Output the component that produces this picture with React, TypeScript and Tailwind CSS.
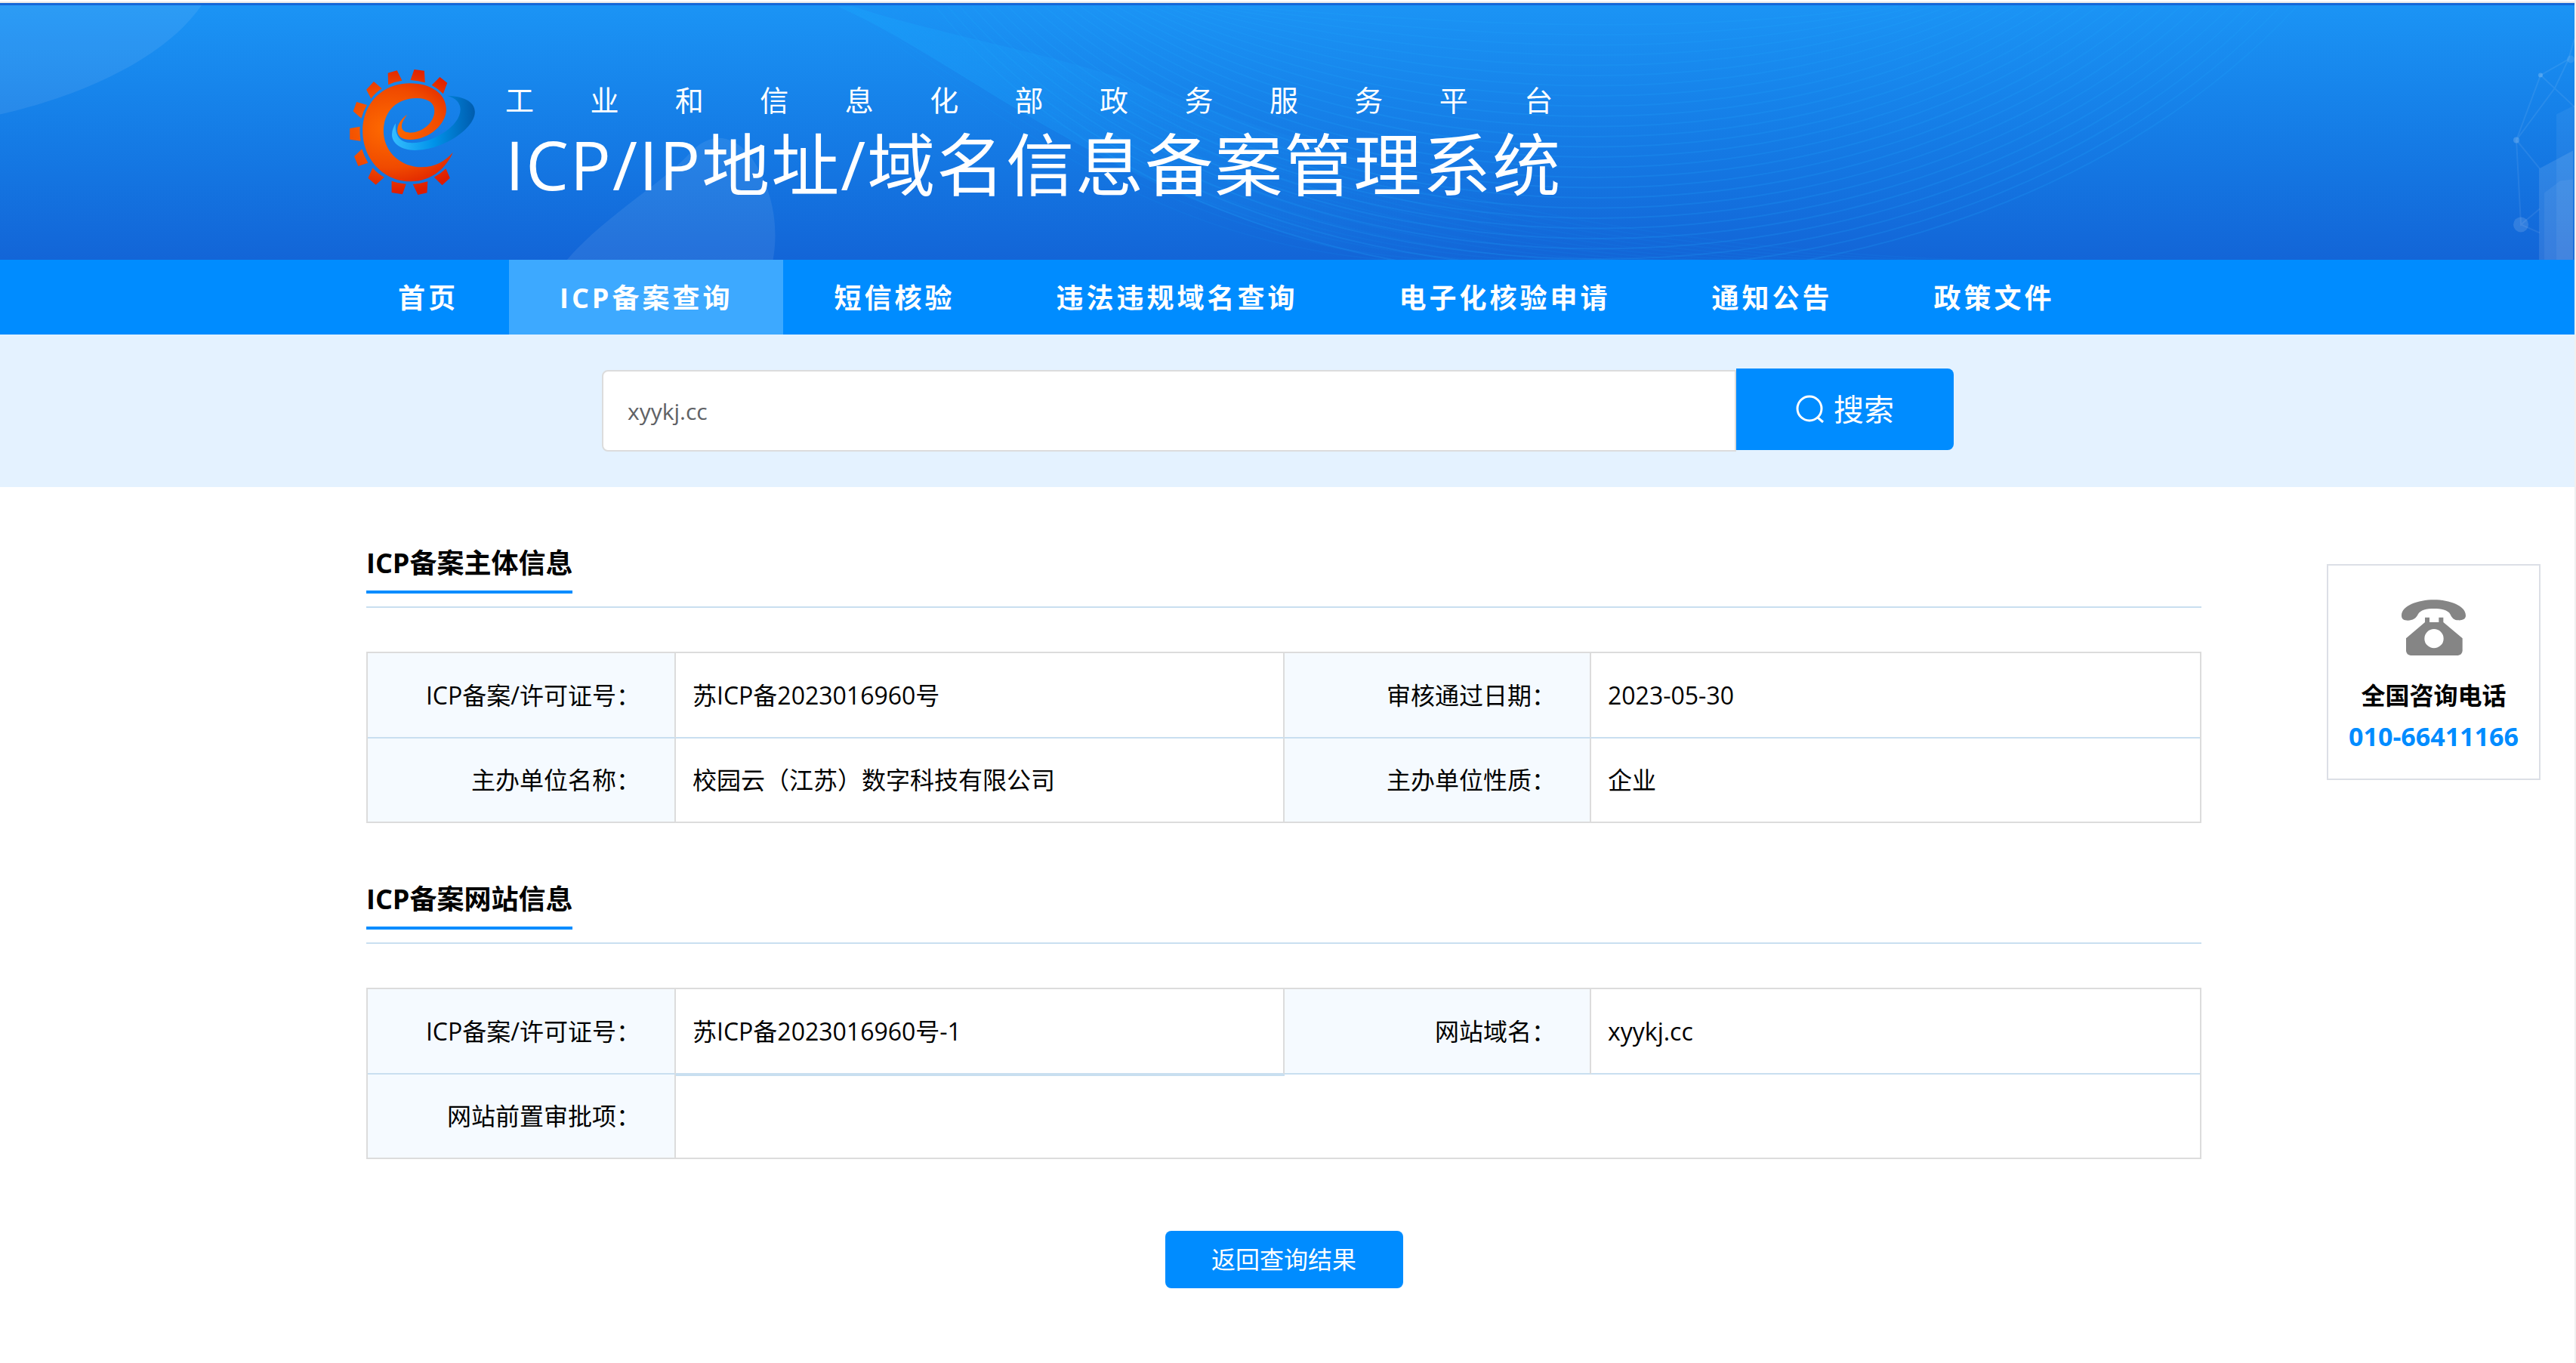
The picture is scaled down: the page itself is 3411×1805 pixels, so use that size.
import React from "react";

const navItems = [
  { label: "首页" },
  { label: "ICP备案查询", active: true },
  { label: "短信核验" },
  { label: "违法违规域名查询" },
  { label: "电子化核验申请" },
  { label: "通知公告" },
  { label: "政策文件" },
];

const waves = Array.from({ length: 26 }, (_, i) => i);
const ripples = Array.from({ length: 14 }, (_, i) => i);

function HeaderBackdrop() {
  return (
    <svg
      className="absolute inset-0 h-full w-full"
      viewBox="0 4 3411 340"
      preserveAspectRatio="xMidYMid slice"
      aria-hidden="true"
      fill="none"
    >
      <defs>
        <linearGradient id="fan" x1="1100" y1="0" x2="2000" y2="340" gradientUnits="userSpaceOnUse">
          <stop offset="0" stopColor="#1aa0fa" stopOpacity="0.6" />
          <stop offset="0.5" stopColor="#1a9cf8" stopOpacity="0.15" />
          <stop offset="1" stopColor="#1a9cf8" stopOpacity="0" />
        </linearGradient>
      </defs>
      <path d="M0 4H268C220 75 110 125 0 150Z" fill="#fff" fillOpacity="0.08" />
      <path
        d="M750 344C800 285 880 240 915 200C940 175 965 175 990 200C1015 230 1035 285 1024 344Z"
        fill="#fff"
        fillOpacity="0.08"
      />
      <path
        d="M1110 7C1230 60 1350 160 1560 255C1700 310 1760 330 1850 344H2400C2100 300 1750 200 1480 100C1350 60 1230 40 1130 7Z"
        fill="url(#fan)"
      />
      <g stroke="#1ea5fa" strokeWidth="2" strokeOpacity="0.22">
        {waves.map((i) => (
          <path
            key={i}
            d={`M${1240 + i * 16} 7C${1620 + i * 14} ${484 - i * 18} ${2590 - i * 14} ${494 - i * 18} ${3043 - i * 22} 7`}
          />
        ))}
      </g>
      <g stroke="#1ea5fa" strokeWidth="2" strokeOpacity="0.08">
        {ripples.map((i) => (
          <path key={i} d={`M${1120 + i * 10} 7C${1400 + i * 20} 220 ${1600 + i * 40} 330 ${1860 + i * 60} 344`} />
        ))}
      </g>
      <g stroke="#fff" strokeWidth="2" strokeOpacity="0.08">
        <path d="M3366 98L3334 184L3365 222M3334 184L3340 296L3365 275M3340 296L3365 307M3366 98L3403 77L3411 50M3366 98L3411 140M3403 77L3385 115L3334 184" />
      </g>
      <g fill="#fff">
        <circle cx="3366" cy="98" r="3" fillOpacity="0.2" />
        <circle cx="3334" cy="184" r="4" fillOpacity="0.18" />
        <circle cx="3340" cy="296" r="10" fillOpacity="0.13" />
        <circle cx="3406" cy="77" r="5" fillOpacity="0.1" />
        <path d="M3387 150L3411 138V344H3387Z" fillOpacity="0.06" />
        <path d="M3364 222L3409 198V344H3364Z" fillOpacity="0.11" />
        <path d="M3371 254L3392 238L3409 236V344H3371Z" fillOpacity="0.06" />
      </g>
    </svg>
  );
}

function Logo() {
  return (
    <svg className="size-[166px] shrink-0" viewBox="0 0 166 166" role="img" aria-label="工业和信息化部">
      <defs>
        <radialGradient id="orange" cx="170" cy="300" r="260" gradientUnits="userSpaceOnUse">
          <stop offset="0" stopColor="#ff6c00" />
          <stop offset="0.6" stopColor="#f04a00" />
          <stop offset="1" stopColor="#dd1c00" />
        </radialGradient>
        <linearGradient id="swoosh" x1="177" y1="0" x2="423" y2="0" gradientUnits="userSpaceOnUse">
          <stop offset="0" stopColor="#35bdff" />
          <stop offset="0.5" stopColor="#0093ea" />
          <stop offset="1" stopColor="#005cae" />
        </linearGradient>
      </defs>
      <g transform="translate(-23 -22) scale(0.4464 0.3333)">
        <path
          d="M340 170C385 172 423 190 423 235C423 300 330 387 245 387C205 387 177 360 177 325C177 308 182 292 188 280C186 320 195 358 237 358C300 358 380 290 380 225C380 200 368 180 340 170Z"
          fill="url(#swoosh)"
        />
        <g fill="url(#orange)">
          <path d="M358 395C340 450 300 510 232 511C150 511 90 420 90 310C90 200 150 121 230 121C295 121 338 165 338 225C338 280 290 345 230 345C205 345 192 330 193 305C194 280 208 258 222 245C214 262 206 275 206 292C206 308 215 316 230 317C265 317 303 280 303 230C303 200 285 180 250 180C190 180 152 235 152 310C152 390 200 453 265 454C305 454 335 430 358 395Z" />
          <path d="M165 80L192 70L207 110Q185 114 166 127ZM243 66L273 71L275 118Q255 110 232 108ZM319 96L341 119L329 163Q314 142 295 128ZM123 114L147 142Q128 158 115 182L101 146ZM72 195L103 207Q92 230 86 260L62 232ZM52 300L82 293Q81 320 84 350L52 344ZM88 382Q94 410 106 437L77 450L65 411ZM120 457Q134 480 154 494L129 524L106 497ZM176 509Q196 519 219 521L208 562L176 555ZM283 511L281 556L254 564L239 522Q262 520 283 511ZM337 460L349 497L326 526L302 494Q322 480 337 460Z" />
        </g>
      </g>
    </svg>
  );
}

function SearchIcon() {
  return (
    <svg className="size-[38px]" viewBox="0 0 38 38" fill="none" stroke="currentColor" strokeWidth="3" aria-hidden="true">
      <circle cx="18" cy="18" r="16" />
      <path d="M29 30L36 36" />
    </svg>
  );
}

function PhoneIcon() {
  return (
    <svg className="h-[75px] w-[85px]" viewBox="390 221 255 225" fill="#858585" aria-hidden="true">
      <path d="M519 222C580 222 645 245 645 285C645 300 630 304 615 303C600 303 590 295 584 280C575 262 545 257 519 257C490 257 465 262 455 280C448 295 435 303 415 304C400 304 390 300 390 285C390 245 455 222 519 222Z" />
      <path
        fillRule="evenodd"
        d="M483 292H501V311H538V292H556V311L632 375V425Q630 441 614 443H426Q410 441 408 425V375L483 311ZM519 338A38 38 0 1 0 519 414A38 38 0 1 0 519 338Z"
      />
    </svg>
  );
}

function SectionTitle({ children }: { children: React.ReactNode }) {
  return (
    <div className="flex border-b-2 border-[#c9dff0] pb-[17px]">
      <h2 className="border-b-4 border-[#008cff] pb-[9px] text-[36px] leading-[54px] font-bold">{children}</h2>
    </div>
  );
}

function Label({ children, last }: { children: React.ReactNode; last?: boolean }) {
  return (
    <th
      scope="row"
      className={
        "border-r-2 border-r-[#dcdcdc] bg-[#f5faff] pr-[45px] text-right font-normal " +
        (last ? "" : "border-b-2 border-b-[#c9dff0]")
      }
    >
      {children}
    </th>
  );
}

function Columns() {
  return (
    <colgroup>
      <col className="w-[408px]" />
      <col className="w-[806px]" />
      <col className="w-[406px]" />
      <col />
    </colgroup>
  );
}

const tableClass =
  "mt-[58px] w-full table-fixed border-separate border-spacing-0 border-2 border-[#dcdcdc] text-[32px] leading-[48px]";

export default function App() {
  return (
    <div className="relative min-h-screen border-r-2 border-[#f0f0f0] bg-white font-['Open_Sans','Noto_Sans_CJK_SC',sans-serif] text-black">
      <div className="h-1 border-b-2 border-[#e8e8e8]" />
      <header className="relative h-[340px] border-t-3 border-[#1467d8] bg-linear-to-b from-[#1b94f5] to-[#1365d7]">
        <HeaderBackdrop />
        <div className="relative pr-[9px]">
          <div className="mx-auto flex w-full max-w-[2474px] items-start pt-[85px]">
            <Logo />
            <div className="ml-10 text-white">
              <p className="pr-3 text-[38px] leading-[80px] [text-align-last:justify]">工业和信息化部政务服务平台</p>
              <h1 className="text-[90px] leading-[90px] tracking-[2px]">ICP/IP地址/域名信息备案管理系统</h1>
            </div>
          </div>
        </div>
      </header>

      <nav className="bg-[#008cff] pr-[9px]">
        <ul className="mx-auto flex w-full max-w-[2480px]">
          {navItems.map((item) => (
            <li key={item.label}>
              <a
                href="#"
                className={
                  "block h-[99px] px-[67px] text-[36px] leading-[102px] font-bold tracking-[4px] whitespace-nowrap text-white " +
                  (item.active ? "bg-[#3da9ff]" : "")
                }
              >
                {item.label}
              </a>
            </li>
          ))}
        </ul>
      </nav>

      <section className="bg-[#e4f2ff] pt-[45px] pr-[25px] pb-[47px]">
        <form className="mx-auto flex w-full max-w-[1790px]" onSubmit={(e) => e.preventDefault()}>
          <input
            type="text"
            aria-label="搜索内容"
            defaultValue="xyykj.cc"
            className="mt-[2px] h-[108px] min-w-0 flex-1 rounded-l-lg border-2 border-[#dcdcdc] bg-white px-8 text-[30px] text-[#606266]"
          />
          <button
            type="submit"
            className="flex h-[108px] w-[288px] items-center justify-center gap-3 rounded-r-lg bg-[#008cff] text-[40px] text-white"
          >
            <SearchIcon />
            搜索
          </button>
        </form>
      </section>

      <main className="pr-[9px]">
        <div className="mx-auto flex w-full max-w-[2430px] flex-col gap-[74px] pt-[74px]">
          <section>
            <SectionTitle>ICP备案主体信息</SectionTitle>
            <table className={tableClass}>
              <Columns />
              <tbody>
                <tr className="h-[113px]">
                  <Label>ICP备案/许可证号：</Label>
                  <td className="border-r-2 border-b-2 border-r-[#dcdcdc] border-b-[#c9dff0] pl-[22px]">苏ICP备2023016960号</td>
                  <Label>审核通过日期：</Label>
                  <td className="border-b-2 border-b-[#c9dff0] pl-[22px]">2023-05-30</td>
                </tr>
                <tr className="h-[110px]">
                  <Label last>主办单位名称：</Label>
                  <td className="border-r-2 border-r-[#dcdcdc] pl-[22px]">校园云（江苏）数字科技有限公司</td>
                  <Label last>主办单位性质：</Label>
                  <td className="pl-[22px]">企业</td>
                </tr>
              </tbody>
            </table>
          </section>
          <section>
            <SectionTitle>ICP备案网站信息</SectionTitle>
            <table className={tableClass}>
              <Columns />
              <tbody>
                <tr className="h-[113px]">
                  <Label>ICP备案/许可证号：</Label>
                  <td className="border-r-2 border-b-2 border-r-[#dcdcdc] border-b-[#c9dff0] pl-[22px] shadow-[0_2px_0_#c9dff0]">
                    苏ICP备2023016960号-1
                  </td>
                  <Label>网站域名：</Label>
                  <td className="border-b-2 border-b-[#c9dff0] pl-[22px]">xyykj.cc</td>
                </tr>
                <tr className="h-[110px]">
                  <Label last>网站前置审批项：</Label>
                  <td colSpan={3} className="pl-[22px]" />
                </tr>
              </tbody>
            </table>
            <button
              type="button"
              className="mx-auto mt-[95px] block h-[76px] w-[315px] rounded-lg bg-[#008cff] text-[32px] text-white"
            >
              返回查询结果
            </button>
          </section>
        </div>
      </main>

      <aside className="absolute top-[747px] right-[45px] flex h-[286px] w-[283px] flex-col items-center border-2 border-[#dcdfe6] bg-white pt-[45px] font-bold">
        <PhoneIcon />
        <p className="mt-[25px] text-[32px] leading-[54px]">全国咨询电话</p>
        <p className="text-[34px] leading-[54px] text-[#008cff]">010-66411166</p>
      </aside>
    </div>
  );
}
